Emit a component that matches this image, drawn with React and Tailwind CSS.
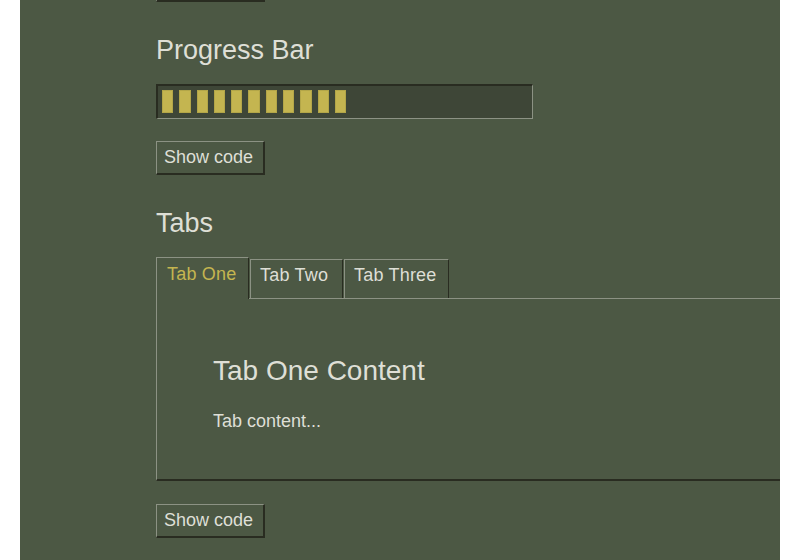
import React from 'react'

const font = { fontFamily: '"Liberation Sans", Arial, sans-serif' }

function Button({ className = '', label = 'Show code' }) {
  return (
    <div className={`h-[34px] w-[109px] box-border border-t border-l border-t-[#8c9284] border-l-[#8c9284] border-b-2 border-r-2 border-b-[#292c21] border-r-[#292c21] pl-[7px] text-[18px] leading-[31px] text-[#dedfd6] bg-[#4c5844] ${className}`}>
      {label}
    </div>
  )
}

function Progress() {
  const segments = Array.from({ length: 11 })
  return (
    <div className="mt-[20px] h-[35px] w-[377px] box-border border-t-2 border-l-2 border-t-[#292c21] border-l-[#292c21] border-b border-r border-b-[#8c9284] border-r-[#8c9284] bg-[#3e4637] pt-[4px] pl-[4px] flex gap-[6px]">
      {segments.map((_, i) => (
        <div key={i} className="h-[23px] w-[11.3px] bg-[#c4b550] shadow-[inset_0_0_0_1px_#b3a648]" />
      ))}
    </div>
  )
}

const tabs = [
  { label: 'Tab One', w: 'w-[93px]' },
  { label: 'Tab Two', w: 'w-[93px]' },
  { label: 'Tab Three', w: 'w-[105px]' },
]

function Tabs() {
  return (
    <div className="w-[680px]">
      <div className="mt-[20px] flex items-end gap-[1px] border-b border-[#8c9284]">
        {tabs.map((t, i) =>
          i === 0 ? (
            <div key={t.label} className={`${t.w} h-[42px] -mb-px box-border border-t border-l border-[#8c9284] border-r border-r-[#292c21] bg-[#4c5844] pl-[10px] pt-[7px] text-[18px] leading-[18px] tracking-[0.2px] text-[#c4b550]`}>
              {t.label}
            </div>
          ) : (
            <div key={t.label} className={`${t.w} h-[39px] box-border border-t border-l border-[#8c9284] border-r border-r-[#292c21] pl-[9px] pt-[6px] text-[18px] leading-[18px] tracking-[0.2px] text-[#dedfd6]`}>
              {t.label}
            </div>
          )
        )}
      </div>
      <div className="h-[182px] box-border border-l border-l-[#8c9284] border-b-2 border-b-[#292c21] pl-[56px] pt-[58px]">
        <div className="text-[28px] leading-[28px] text-[#dedfd6]">Tab One Content</div>
        <div className="mt-[27px] text-[18px] leading-[18px] text-[#dedfd6]">Tab content...</div>
      </div>
    </div>
  )
}

export default function App() {
  return (
    <div className="w-[800px] h-[560px] bg-white flex px-[20px]" style={font}>
      <div className="w-[760px] h-full overflow-hidden bg-[#4c5844] pl-[136px]">
        {/* previous section's button, scrolled almost out of view */}
        <Button className="-mt-[32px]" label="" />
        <div className="mt-[35px] text-[27px] leading-[27px] text-[#dedfd6]">Progress Bar</div>
        <Progress />
        <Button className="mt-[22px]" />
        <div className="mt-[35px] text-[27px] leading-[27px] text-[#dedfd6]">Tabs</div>
        <Tabs />
        <Button className="mt-[23px]" />
      </div>
    </div>
  )
}
